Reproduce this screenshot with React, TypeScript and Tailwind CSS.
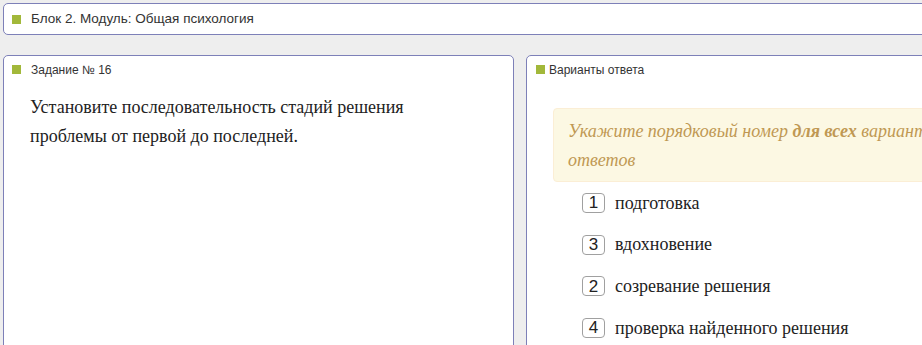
import React from "react";

const Square = () => <span className="inline-block w-[9px] h-[9px] bg-[#a2b83a] shrink-0" />;

const items = [
  { n: "1", t: "подготовка" },
  { n: "3", t: "вдохновение" },
  { n: "2", t: "созревание решения" },
  { n: "4", t: "проверка найденного решения" },
];

export default function App() {
  return (
    <div className="w-[922px] h-[345px] overflow-hidden bg-[#eeeeee]">
      <div className="w-[1040px] pl-[3px] pt-[3px] flex flex-col gap-[20px]">
        <div className="h-[32px] bg-white border border-[#7d80b8] rounded-[5px] flex items-center gap-[10px] pl-[8px] font-['Liberation_Sans',Arial,sans-serif] text-[13.5px] text-[#333]">
          <Square />
          <span>Блок 2. Модуль: Общая психология</span>
        </div>
        <div className="flex gap-[12px]">
          <div className="w-[511px] h-[300px] bg-white border border-[#7d80b8] rounded-[5px] shrink-0">
            <div className="flex items-center gap-[10px] pl-[8px] h-[27px] font-['Liberation_Sans',Arial,sans-serif] text-[12px] text-[#333]">
              <Square />
              <span>Задание № 16</span>
            </div>
            <div className="pl-[26px] pt-[10px] pr-[20px] font-['Liberation_Serif','Times_New_Roman',serif] text-[18px] leading-[29px] text-[#222]">
              Установите последовательность стадий решения
              <br />
              проблемы от первой до последней.
            </div>
          </div>
          <div className="w-[510px] h-[300px] bg-white border border-[#7d80b8] rounded-[5px] shrink-0">
            <div className="flex items-center gap-[4px] pl-[9px] h-[27px] font-['Liberation_Sans',Arial,sans-serif] text-[12px] text-[#333]">
              <Square />
              <span>Варианты ответа</span>
            </div>
            <div className="pl-[26px] pt-[25px]">
              <div className="w-[470px] h-[74px] bg-[#fcf8e3] border border-[#fbeed5] rounded-[4px] pl-[14px] pt-[8px] font-['Liberation_Serif','Times_New_Roman',serif] italic text-[18px] leading-[29px] text-[#c09853]">
                Укажите порядковый номер <b>для всех</b> вариантов
                <br />
                ответов
              </div>
              <div className="pl-[29px] pt-[11px] flex flex-col gap-[21.7px]">
                {items.map((it) => (
                  <div key={it.t} className="flex items-center gap-[10px] h-[20px]">
                    <span className="w-[23px] h-[20px] border border-[#a0a0a0] rounded-[4px] flex items-center justify-center font-['Liberation_Sans',Arial,sans-serif] text-[17px] text-[#222]">
                      {it.n}
                    </span>
                    <span className="font-['Liberation_Serif','Times_New_Roman',serif] text-[18px] text-[#222]">{it.t}</span>
                  </div>
                ))}
              </div>
            </div>
          </div>
        </div>
      </div>
    </div>
  );
}
